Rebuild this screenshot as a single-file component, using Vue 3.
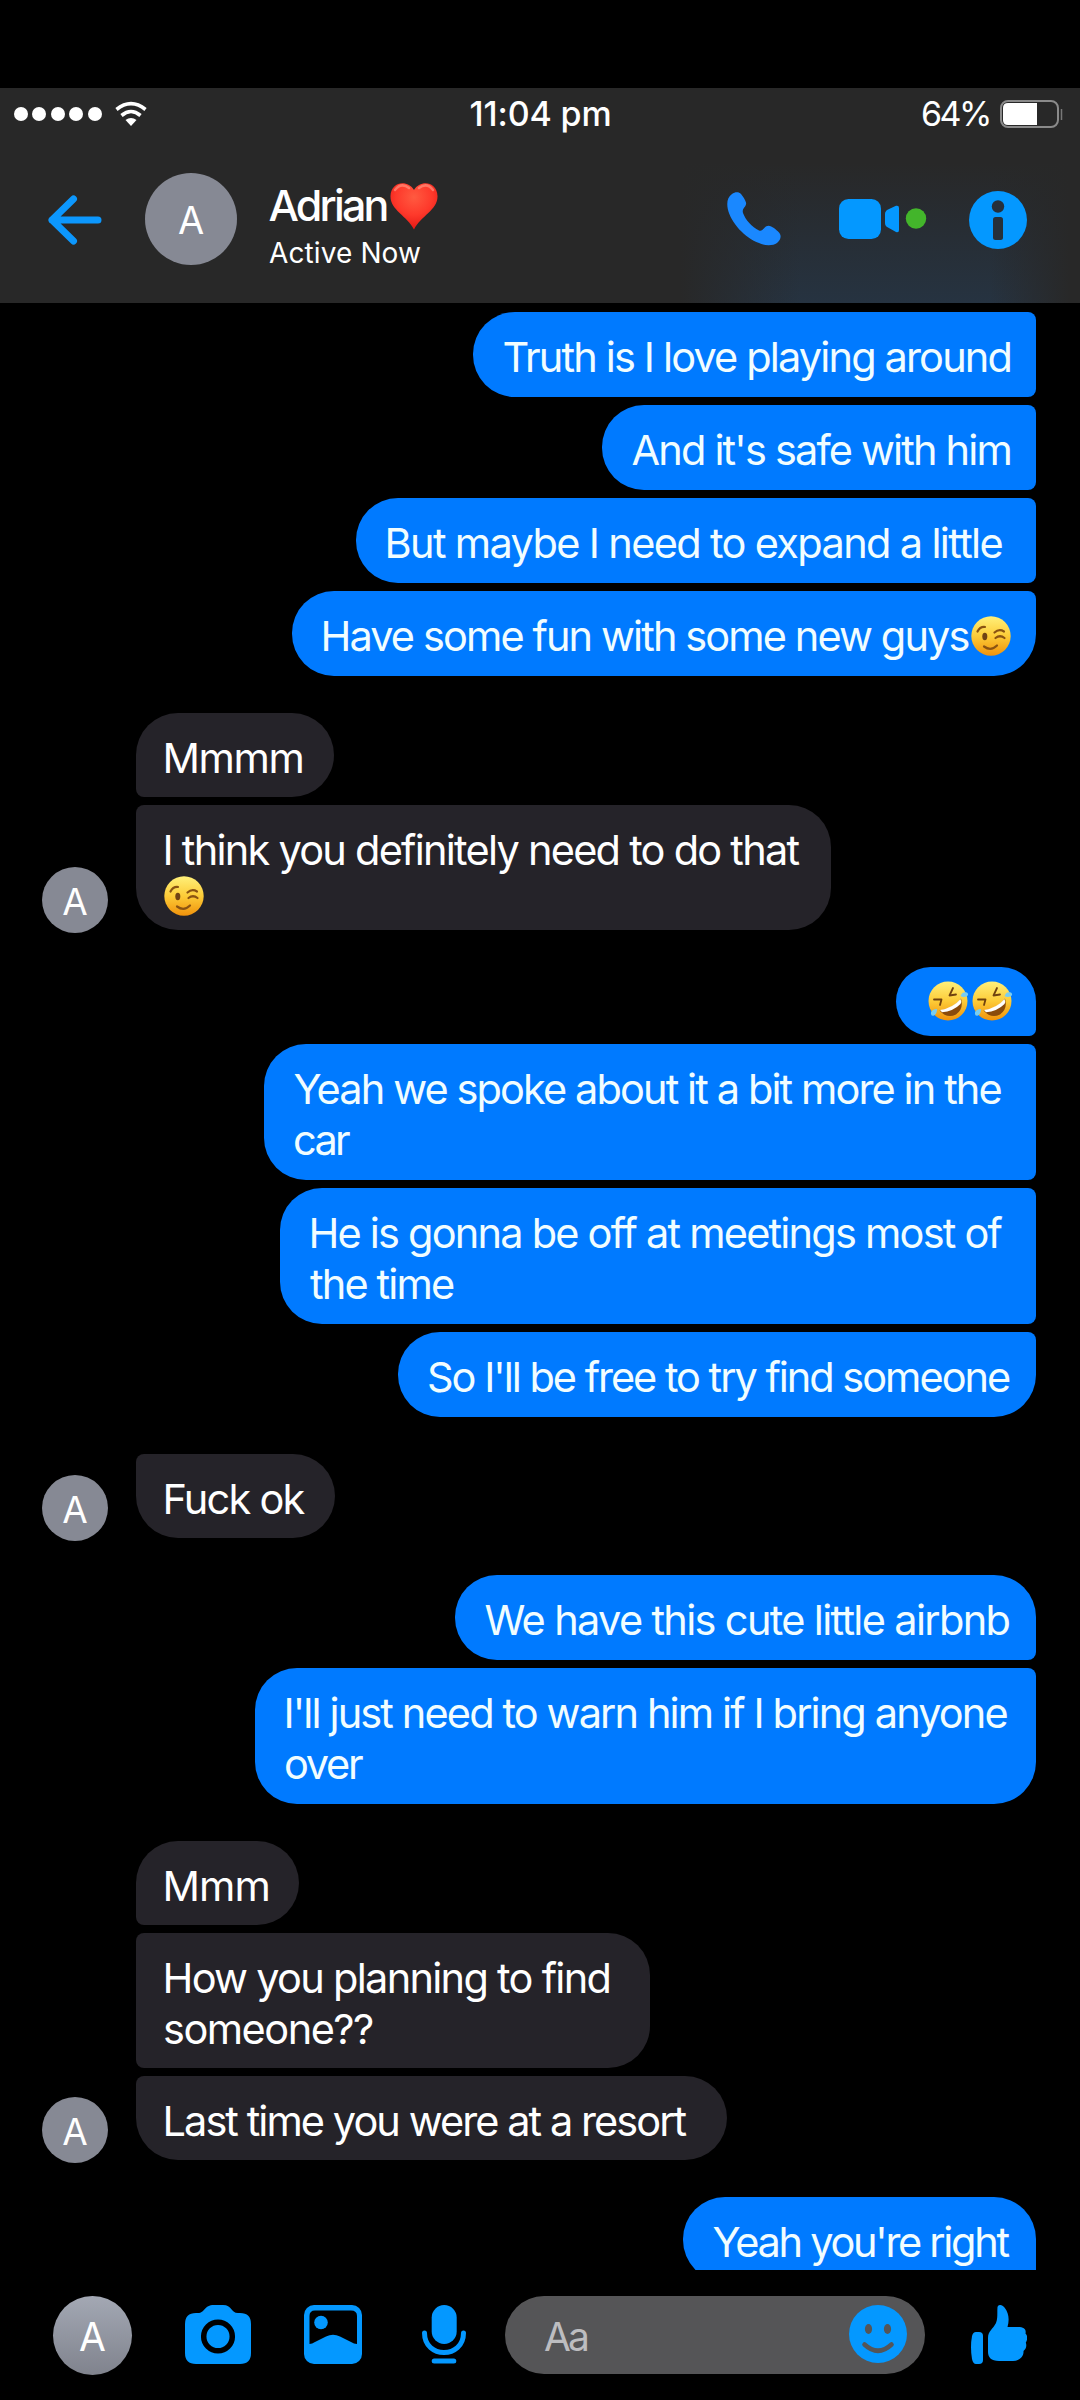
<script setup>
import { h } from 'vue'

// Tightens or loosens tracking so that the glyphs of a line span the given width.
const vFit = {
  mounted(el, { value }) {
    const style = getComputedStyle(el)
    const ctx = document.createElement('canvas').getContext('2d')
    ctx.font = `${style.fontWeight} ${style.fontSize} ${style.fontFamily}`
    const text = el.textContent.trim()
    const m = ctx.measureText(text)
    const ink = m.actualBoundingBoxRight + m.actualBoundingBoxLeft
    if (text.length > 1) el.style.letterSpacing = `${(value - ink) / (text.length - 1)}px`
    el.style.marginLeft = `${m.actualBoundingBoxLeft / 2}px`
  },
}

const groups = [
  { side: 'out', items: [
    { w: 563, pos: 'mid', lines: [['Truth is I love playing around', 507]] },
    { w: 434, pos: 'mid', lines: [["And it's safe with him", 378]] },
    { w: 680, pos: 'mid', lines: [['But maybe I need to expand a little', 615]] },
    { w: 744, pos: 'last', lines: [['Have some fun with some new guys', 645, 'wink']] },
  ] },
  { side: 'in', items: [
    { w: 198, pos: 'first', lines: [['Mmmm', 137]] },
    { w: 695, pos: 'last', tail: true, lines: [['I think you definitely need to do that', 634], ['', 0, 'wink']] },
  ] },
  { side: 'out', items: [
    { w: 140, pos: 'first', jumbo: true, lines: [['', 0, 'rofl']] },
    { w: 772, pos: 'mid', lines: [['Yeah we spoke about it a bit more in the', 707], ['car', 55]] },
    { w: 756, pos: 'mid', lines: [['He is gonna be off at meetings most of', 691], ['the time', 144]] },
    { w: 638, pos: 'last', lines: [["So I'll be free to try find someone", 581]] },
  ] },
  { side: 'in', items: [
    { w: 199, pos: 'last', lines: [['Fuck ok', 140]] },
  ] },
  { side: 'out', items: [
    { w: 581, pos: 'first', lines: [['We have this cute little airbnb', 524]] },
    { w: 781, pos: 'last', lines: [["I'll just need to warn him if I bring anyone", 721], ['over', 77]] },
  ] },
  { side: 'in', items: [
    { w: 163, pos: 'first', lines: [['Mmm', 103]] },
    { w: 514, pos: 'mid', lines: [['How you planning to find', 444], ['someone??', 208]] },
    { w: 591, pos: 'last', lines: [['Last time you were at a resort', 521]] },
  ] },
  { side: 'out', items: [
    { w: 353, pos: 'first', lines: [["Yeah you're right", 296]] },
  ] },
]

const Wink = () => h('svg', { class: 'emoji', viewBox: '0 0 40 40', width: 40, height: 40, role: 'img', 'aria-label': '😉' }, [
  h('circle', { cx: 20, cy: 20, r: 19.7, fill: 'url(#face)' }),
  h('ellipse', { cx: 13.8, cy: 20.5, rx: 2.5, ry: 3.7, fill: '#704214' }),
  h('path', { d: 'M6.5 15.5Q9 10.5 14 11M23.5 16.5Q28 12.5 33 15.5M24.5 22Q29 18.5 33.5 22M13 30.5Q20 35.5 26 29.5', fill: 'none', stroke: '#8a5312', 'stroke-width': 2.2, 'stroke-linecap': 'round' }),
])

const Rofl = () => h('svg', { class: 'emoji', viewBox: '0 0 41 41', width: 41, height: 41, role: 'img', 'aria-label': '🤣' }, [
  h('circle', { cx: 20, cy: 20, r: 19.5, fill: 'url(#face)' }),
  h('path', { d: 'M6 18.5L13.5 18.5L12 24M25 7L21.5 14.5L28 13.5', fill: 'none', stroke: '#70420f', 'stroke-width': 1.8, 'stroke-linejoin': 'round', 'stroke-linecap': 'round' }),
  h('path', { d: 'M11.5 29.5Q25 28 33 17.5Q36 28 28 33.5Q19 38 11.5 29.5Z', fill: '#8a4b0c' }),
  h('path', { d: 'M12 29Q25 27 32.5 18Q34 21 32.5 23Q25 30.5 14 31.3Z', fill: '#fff' }),
  h('path', { d: 'M33 14.5Q34 10.5 39 11.5Q41.5 14 38.5 15.5Q35 16.5 32.5 15ZM9 28Q4 28 3 31.5Q2.5 35.5 6 34.5Q9 33 9 28Z', fill: '#79cdf2' }),
])
</script>

<template>
  <div class="phone">
    <svg class="defs" width="0" height="0" aria-hidden="true">
      <defs>
        <linearGradient id="face" x1="0" y1="0" x2="0" y2="1">
          <stop offset="0" stop-color="#fff07a" />
          <stop offset=".5" stop-color="#fdcc38" />
          <stop offset="1" stop-color="#f0920c" />
        </linearGradient>
        <radialGradient id="heart" cx=".5" cy=".3" r=".7">
          <stop offset="0" stop-color="#ff5a40" />
          <stop offset=".55" stop-color="#fe392b" />
          <stop offset="1" stop-color="#e41814" />
        </radialGradient>
      </defs>
    </svg>

    <header class="top">
      <div class="status">
        <div class="signal">
          <i v-for="n in 5" :key="n"></i>
          <svg width="32" height="26" viewBox="0 0 32 26" fill="none" stroke="#fff" stroke-width="3.6">
            <path d="M1.5 8.5Q16-3.2 30.5 8.5" />
            <path d="M6.5 14.5Q16 6.5 25.500 14.5" />
            <path d="M10.5 19Q16 15 21.5 19L16 25Z" fill="#fff" stroke="none" />
          </svg>
        </div>
        <div class="time"><span v-fit="139">11:04 pm</span></div>
        <div class="power">
          <span v-fit="66">64%</span>
          <svg width="64" height="28" viewBox="0 0 64 28">
            <rect x="1" y="1" width="57" height="26" rx="7" fill="none" stroke="#8a8a8a" stroke-width="2" />
            <path d="M37 3V25H8Q3 25 3 20V8Q3 3 8 3Z" fill="#fff" />
            <path d="M61.5 9V20" stroke="#777" stroke-width="1.5" />
          </svg>
        </div>
      </div>
      <div class="bar">
        <svg class="back" width="56" height="52" viewBox="0 0 56 52" fill="none" stroke="#0c97fd" stroke-width="7" stroke-linecap="round" stroke-linejoin="round">
          <path d="M52 26H6M27.500 5L6 26L27.500 47" />
        </svg>
        <div class="avatar head">A</div>
        <div class="who">
          <div class="name">
            <span v-fit="117">Adrian</span>
            <svg width="48" height="48" viewBox="0 0 48 48" role="img" aria-label="❤️">
              <path d="M24 8C30-2.5 47-1 47.500 14C48 28 31 34 24 47.500C17 34 0 28 .5 14C1-1 18-2.5 24 8Z" fill="url(#heart)" />
              <path d="M5 8Q11 0 19 6M29 6Q37 0 43 8" fill="none" stroke="#ffb09c" stroke-width="2.5" stroke-linecap="round" opacity=".5" />
            </svg>
          </div>
          <div class="active"><span v-fit="151">Active Now</span></div>
        </div>
        <svg class="call" width="54" height="54" viewBox="0 0 54 54" fill="#1a88ff">
          <path d="M5 2C8-.5 12-.5 14 2C16 4.5 18 7.5 19 10.5C20 15 14.5 16 16 21C18.5 28 25 35 32 38.5C36 40 37 34 41.5 33.8C45 34 49 37.5 52 40.5C55 44 53.5 48 50 51C46 54 38 54 32 51C18 46 4 31 .8 17C-.5 10 .5 5.5 5 2Z" />
        </svg>
        <svg class="video" width="88" height="40" viewBox="0 0 88 40" fill="#0498ff">
          <rect width="42" height="40" rx="9.5" />
          <path d="M46 15Q46 12 49 10.5L57 6.8Q60 6 60 9V31Q60 34 57 33L49 28.5Q46 27 46 24Z" />
          <circle cx="77" cy="19.5" r="10.2" fill="#43b52b" />
        </svg>
        <svg class="info" width="58" height="58" viewBox="0 0 58 58">
          <circle cx="29" cy="29" r="29" fill="#0498ff" />
          <circle cx="29" cy="15.5" r="6.2" fill="#26303a" />
          <rect x="24" y="26" width="10" height="23" rx="2.5" fill="#26303a" />
        </svg>
      </div>
    </header>

    <main class="thread">
      <section v-for="(g, gi) in groups" :key="gi" class="group" :class="g.side">
        <div v-if="g.side === 'in'" class="avatar small">A</div>
        <div class="stack">
          <div
            v-for="(m, mi) in g.items"
            :key="mi"
            class="bubble"
            :class="[m.pos, { jumbo: m.jumbo, tail: m.tail }]"
            :style="{ width: m.w + 'px' }"
          >
            <div v-for="(l, li) in m.lines" :key="li" class="line">
              <span v-if="l[0]" v-fit="l[1]">{{ l[0] }}</span>
              <Wink v-if="l[2] === 'wink'" />
              <template v-if="l[2] === 'rofl'"><Rofl /><Rofl /></template>
            </div>
          </div>
        </div>
      </section>
    </main>

    <footer class="composer">
      <div class="avatar me">A</div>
      <svg class="cam" width="66" height="60" viewBox="0 0 66 60" fill="#0498ff">
        <path d="M11 8H13C20 8 19 0 29 0H38C47 0 46 8 53 8H55Q66 8 66 19V48Q66 59 55 59H11Q0 59 0 48V19Q0 8 11 8Z" />
        <circle cx="33" cy="31.5" r="14.3" stroke="#000" stroke-width="5.5" />
      </svg>
      <svg class="pic" width="58" height="60" viewBox="0 0 58 60">
        <rect width="58" height="59" rx="10" fill="#0498ff" />
        <path d="M5.5 39V11Q5.5 5.5 11 5.5H47Q53 5.5 53 11V39Q50 39 47 37L36 31.500Q29 28 22 31.500L11 37Q8 39 5.5 39Z" fill="#000" />
        <circle cx="17" cy="17.5" r="6.8" fill="#0498ff" />
      </svg>
      <svg class="mic" width="44" height="60" viewBox="0 0 44 60" fill="none" stroke="#0498ff" stroke-width="5" stroke-linecap="round">
        <rect x="9.7" y="0" width="25" height="39" rx="12.5" fill="#0498ff" stroke="none" />
        <path d="M2.5 28C2.5 54 41.5 54 41.5 28M12.200 56H31.8" />
      </svg>
      <div class="field">
        <span v-fit="43">Aa</span>
        <svg width="58" height="58" viewBox="0 0 58 58">
          <circle cx="29" cy="29" r="29" fill="#0498ff" />
          <ellipse cx="19.5" cy="24" rx="3.6" ry="5" fill="#555557" />
          <ellipse cx="38.5" cy="24" rx="3.6" ry="5" fill="#555557" />
          <path d="M15.5 39.5Q29 52 42.5 39.5" fill="none" stroke="#555557" stroke-width="4.600" stroke-linecap="round" />
        </svg>
      </div>
      <svg class="like" width="56" height="60" viewBox="0 0 56 60" fill="#0498ff">
        <path d="M5 27H8Q12 27 12 31V55Q12 59 8 59H5Q2 59 1 54Q-1 42 1 31Q2 27 5 27Z" />
        <path d="M26.5 2C27.5-1 31-.5 33.5 2.5C38 8 38.5 15 36.5 22H47C53 22 55.5 24.5 54.5 28.5C57 31 56.5 35 54.8 37.5C56 41 55 44 52.5 46C53 51 49 56 42 56H28C20 56 17 52 17 47V33C17 26 22 24 25 18C27 13 26 8 26.5 2Z" />
      </svg>
    </footer>
  </div>
</template>

<style>
body {
  margin: 0;
  background: #000;
}
</style>

<style scoped>
.phone {
  display: flex;
  flex-direction: column;
  width: 1080px;
  height: 2400px;
  padding-top: 88px;
  box-sizing: border-box;
  overflow: hidden;
  background: #000;
  color: #fff;
  font-family: Inter, "Liberation Sans", sans-serif;
}
.defs {
  position: absolute;
}
svg {
  display: block;
  flex: none;
}
span {
  white-space: pre;
}
.top {
  flex: none;
  height: 215px;
  background:
    linear-gradient(90deg, #282828 680px, rgba(40, 40, 40, 0) 800px, rgba(40, 40, 40, 0) 990px, #282828 1070px),
    linear-gradient(#282828 75px, #263341 215px);
}
.status {
  display: grid;
  grid-template-columns: 470px 1fr auto;
  align-items: center;
  height: 51px;
  padding: 0 16px 0 0;
  font-size: 34px;
  line-height: 51px;
}
.signal {
  display: flex;
  align-items: center;
  gap: 4.4px;
  padding-left: 14px;
}
.signal i {
  width: 14px;
  height: 14px;
  border-radius: 50%;
  background: #fff;
}
.signal svg {
  margin-left: 9px;
}
.time {
  font-weight: 550;
}
.power {
  display: flex;
  align-items: center;
  width: 142px;
  justify-content: space-between;
}
.bar {
  display: flex;
  align-items: center;
  height: 160px;
  padding-left: 46px;
}
.back {
  margin-top: 2px;
}
.avatar {
  display: flex;
  flex: none;
  align-items: center;
  justify-content: center;
  box-sizing: border-box;
  border-radius: 50%;
  background: #868994;
  color: #fff;
}
.head {
  width: 92px;
  height: 92px;
  margin-left: 43px;
  padding-top: 2px;
  font-size: 38px;
}
.who {
  width: 180px;
  height: 92px;
  margin: 0 278px 0 32px;
}
.name {
  display: flex;
  height: 56px;
  gap: 3px;
  font-size: 43px;
  font-weight: 550;
  line-height: 64px;
}
.name svg {
  margin-top: 9px;
}
.active {
  font-size: 28px;
  line-height: 48px;
}
.video {
  margin-left: 58px;
}
.info {
  margin: 1px 0 0 42px;
}
.thread {
  display: flex;
  flex-direction: column;
  gap: 37px;
  height: 1967px;
  flex: none;
  padding-top: 9px;
  box-sizing: border-box;
  overflow: hidden;
}
.group {
  display: flex;
  flex: none;
  align-items: flex-end;
  padding: 0 44px 0 42px;
}
.out {
  justify-content: flex-end;
}
.stack {
  display: flex;
  flex-direction: column;
  gap: 8px;
}
.out .stack {
  align-items: flex-end;
}
.small {
  width: 66px;
  height: 66px;
  margin: 0 28px -3px 0;
  padding-top: 3px;
  font-size: 37px;
}
.bubble {
  box-sizing: border-box;
  padding: 20px 0 14px 30px;
  border-radius: 42px 8px 8px 42px;
  background: #007aff;
  color: #f1fdff;
  font-size: 41.5px;
}
.out .first {
  border-top-right-radius: 42px;
}
.out .last {
  border-bottom-right-radius: 42px;
}
.in .bubble {
  padding: 20px 0 13px 28px;
  border-radius: 8px 42px 42px 8px;
  background: #252329;
  color: #fff;
}
.in .first {
  border-top-left-radius: 42px;
}
.in .last {
  border-bottom-left-radius: 42px;
}
.line {
  display: flex;
  height: 51px;
  line-height: 51px;
}
.line .emoji {
  margin-top: 5px;
}
.line span + .emoji {
  margin-left: 2px;
}
.tail {
  height: 125px;
}
.tail .line .emoji {
  margin-top: 0;
}
.bubble.jumbo {
  height: 69px;
  padding: 14px 0 0 32px;
  border-radius: 36px 36px 7px 36px;
}
.jumbo .line {
  gap: 3px;
}
.jumbo .line .emoji {
  margin-top: 0;
}
.composer {
  display: flex;
  flex: none;
  align-items: center;
  height: 130px;
  padding: 0 0 0 53px;
}
.me {
  width: 79px;
  height: 79px;
  padding-top: 2px;
  background: linear-gradient(#a3a8b4, #80838d);
  font-size: 39px;
}
.cam {
  margin-left: 53px;
}
.pic {
  margin-left: 53px;
}
.mic {
  margin-left: 60px;
}
.field {
  display: flex;
  align-items: center;
  justify-content: space-between;
  width: 420px;
  height: 78px;
  margin-left: 39px;
  padding: 0 18px 2px 39px;
  box-sizing: border-box;
  border-radius: 39px;
  background: #555557;
  color: #bdbdc0;
  font-size: 39px;
}
.field span {
  padding-top: 5px;
}
.like {
  margin-left: 46px;
}
</style>
